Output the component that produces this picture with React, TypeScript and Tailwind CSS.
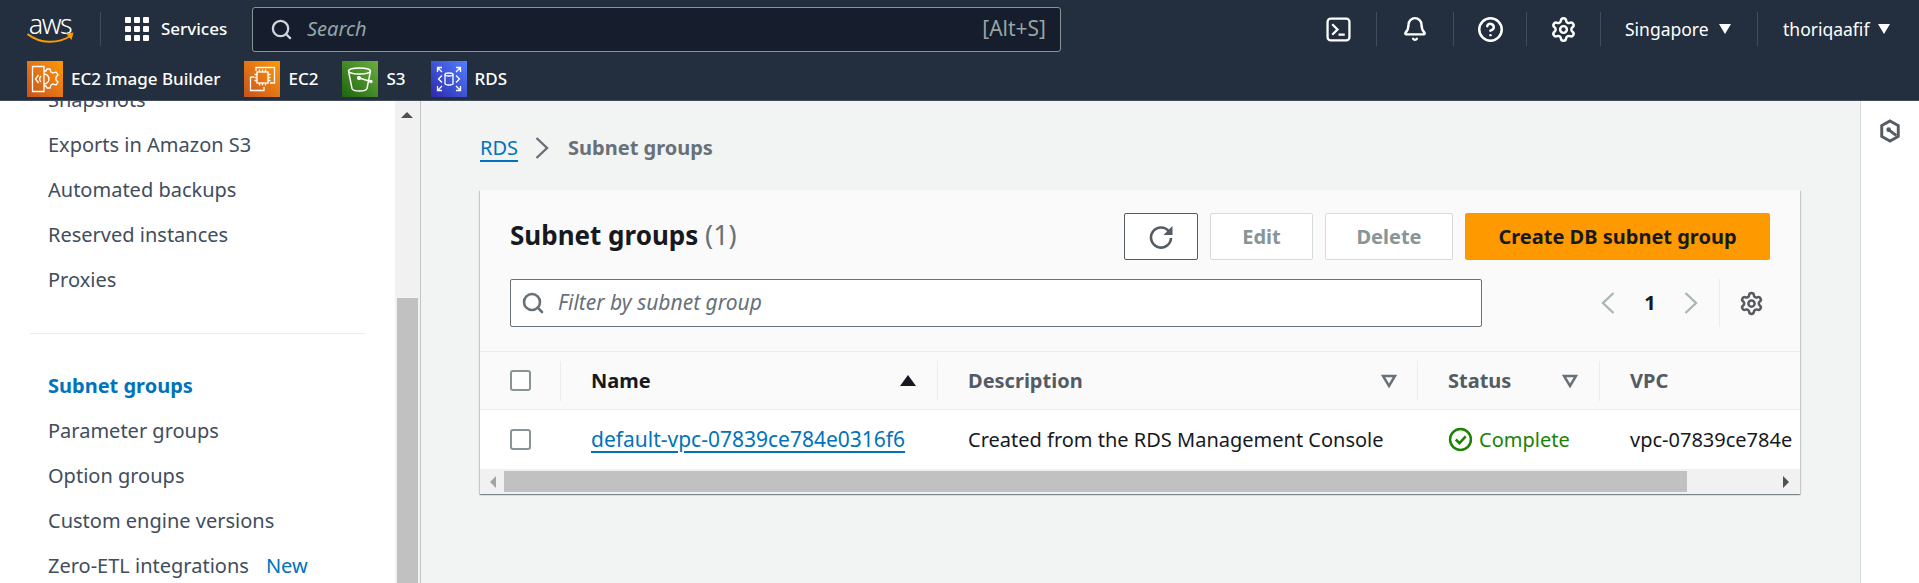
import { Search, Settings, Bell, CircleHelp } from 'lucide-react';

const font = "font-['Noto_Sans','Open_Sans',sans-serif]";

function Ec2ImageBuilderIcon() {
  return (
    <svg viewBox="0 0 36 36" className="w-9 h-9 bg-linear-to-tr from-[#c8511b] to-[#ff9900]" fill="none" stroke="white" strokeWidth="1.300">
      <path d="M5.500 5.500h11.500v25H5.500z" />
      <path d="M11.500 14l-3 4 3 4M14 15a4 4 0 0 0 0 6" />
      <path d="M17 10h2l1-2h3l1 3 2 1 3-1 2 3-2 2v3l2 2-2 3-3-1-2 1-1 3h-3l-1-2h-2M17 13a5 5 0 0 1 0 10" />
    </svg>
  );
}

function Ec2Icon() {
  return (
    <svg viewBox="0 0 36 36" className="w-9 h-9 bg-linear-to-tr from-[#c8511b] to-[#ff9900]" fill="none" stroke="white" strokeWidth="1.300">
      <path d="M12 10V6.500h18.500V22H26M6.500 16v13.500H20V26M6.500 16H10" />
      <rect x="13" y="11" width="11" height="11" />
      <path d="M15.500 11V8.500M18.500 11V8.500M21.500 11V8.500M15.500 24.500V22M18.500 24.500V22M21.500 24.500V22M10.500 13.500H13M10.500 16.500H13M10.500 19.500H13M24 13.500h2.500M24 16.500h2.500M24 19.500h2.500" />
    </svg>
  );
}

function S3Icon() {
  return (
    <svg viewBox="0 0 36 36" className="w-9 h-9 bg-linear-to-tr from-[#1b660f] to-[#6cae3e]" fill="none" stroke="white" strokeWidth="1.400">
      <ellipse cx="17.500" cy="10" rx="11" ry="3" />
      <path d="M6.500 10l3.500 17.500c.5 1.500 3.500 2.500 7.500 2.500s7-1 7.500-2.500l3.500-17.500" />
      <path d="M17 17l12 3.500" />
      <circle cx="17" cy="17" r="1.400" fill="white" />
      <circle cx="29" cy="20.500" r="1" fill="white" />
    </svg>
  );
}

function RdsIcon() {
  return (
    <svg viewBox="0 0 36 36" className="w-9 h-9 bg-linear-to-tr from-[#2e27ad] to-[#527fff]" fill="none" stroke="white" strokeWidth="1.300">
      <path d="M6.500 11V6.500H11M6.500 6.500l4.500 4.500M29.500 11V6.500H25M29.500 6.500L25 11M6.500 25v4.500H11M6.500 29.500l4.500-4.500M29.500 25v4.500H25M29.500 29.500L25 25" />
      <ellipse cx="18" cy="13.500" rx="4" ry="1.500" />
      <path d="M14 13.500v9c0 1 1.800 1.500 4 1.500s4-.5 4-1.500v-9" />
      <path d="M11 14.500l-3.500 3.500 3.500 3.500M25 14.500l3.500 3.500-3.500 3.500" />
    </svg>
  );
}

function ServiceLink({ icon, label, gap }: { icon: React.ReactNode; label: string; gap: string }) {
  return (
    <div className={`flex items-center gap-2 ${gap}`}>
      {icon}
      <span className="text-[17px] font-medium text-white">{label}</span>
    </div>
  );
}

function Sep({ className = '' }: { className?: string }) {
  return <div className={`w-px h-[34px] bg-[#414d5c] ${className}`} />;
}

function NavIconCell({ children, width }: { children: React.ReactNode; width: string }) {
  return (
    <div className={`${width} h-[34px] flex items-center justify-center border-r border-[#414d5c]`}>
      {children}
    </div>
  );
}

function Caret() {
  return <span className="w-0 h-0 border-x-[6px] border-x-transparent border-t-[10px] border-t-white" />;
}

function TopNav() {
  return (
    <header className="h-[101px] shrink-0 bg-[#232f3e] border-b border-[#414d5c] flex flex-col">
      <div className="h-[58px] flex items-center pl-[27px]">
        <div className="w-[46px] h-[30px] flex flex-col items-center">
          <span className="text-[27px] leading-[19px] font-light text-white tracking-[-1.500px]">aws</span>
          <svg viewBox="0 0 47 12" className="w-[47px] h-[12px] shrink-0 -mt-[1px]" fill="none">
            <path d="M0.500 2c13 10 30 10 43 2" stroke="#ff9900" strokeWidth="2" />
            <path d="M39 1.500l7.500-1-2 7.500z" fill="#ff9900" />
          </svg>
        </div>
        <Sep className="ml-[27px]" />
        <div className="ml-[24px] w-6 h-6 grid grid-cols-3 gap-[3px]">
          {Array.from({ length: 9 }).map((_, i) => (
            <span key={i} className="bg-white rounded-[1px]" />
          ))}
        </div>
        <span className="ml-[12px] w-[66px] whitespace-nowrap text-[17px] font-medium text-white">Services</span>
        <div className="ml-[25px] w-[809px] h-[45px] rounded-[3px] border border-[#879596] bg-[#161e2d] flex items-center pl-[17px] pr-[14px]">
          <Search className="w-[23px] h-[23px] text-[#d1d5db]" strokeWidth={2.400} />
          <span className="ml-[14px] text-[20px] italic text-[#95a5a6]">Search</span>
          <span className="ml-auto text-[21px] text-[#95a5a6]">[Alt+S]</span>
        </div>
        <div className="ml-auto flex items-center">
          <NavIconCell width="w-[76px]">
            <svg viewBox="0 0 24 24" className="w-[25px] h-[25px]" fill="none" stroke="white" strokeWidth="2.200">
              <rect x="1.500" y="1.500" width="21" height="21" rx="3" />
              <path d="M6 7l5 5-5 5M12 17h6" />
            </svg>
          </NavIconCell>
          <NavIconCell width="w-[77px]">
            <Bell className="w-[26px] h-[26px] text-white" strokeWidth={2.200} />
          </NavIconCell>
          <NavIconCell width="w-[73px]">
            <CircleHelp className="w-[27px] h-[27px] text-white" strokeWidth={2.200} />
          </NavIconCell>
          <NavIconCell width="w-[74px]">
            <Settings className="w-[27px] h-[27px] text-white" strokeWidth={2.200} />
          </NavIconCell>
          <div className="w-[157px] h-[34px] pl-[24px] flex items-center gap-[10px] border-r border-[#414d5c] text-[17.500px] text-white">
            Singapore
            <Caret />
          </div>
          <div className="w-[161px] h-[34px] pl-[25px] flex items-center gap-[9px] text-[17.500px] text-white">
            thoriqaafif
            <Caret />
          </div>
        </div>
      </div>
      <div className="flex items-center pl-[27px] h-[36px] mt-[3px]">
        <ServiceLink icon={<Ec2ImageBuilderIcon />} label="EC2 Image Builder" gap="mr-[24px]" />
        <ServiceLink icon={<Ec2Icon />} label="EC2" gap="mr-[24px]" />
        <ServiceLink icon={<S3Icon />} label="S3" gap="mr-[25px]" />
        <ServiceLink icon={<RdsIcon />} label="RDS" gap="" />
      </div>
    </header>
  );
}

const links = ['Snapshots', 'Exports in Amazon S3', 'Automated backups', 'Reserved instances', 'Proxies'];
const links2 = ['Parameter groups', 'Option groups', 'Custom engine versions'];

function Sidebar() {
  return (
    <aside className="w-[395px] shrink-0 bg-white overflow-hidden text-[20px] text-[#414d5c]">
      <div className="-mt-[24px] pl-[48px]">
        {links.map((l) => (
          <div key={l} className="h-[45px] flex items-center">{l}</div>
        ))}
      </div>
      <div className="ml-[30px] w-[335px] h-px bg-[#eaeded] mt-[31px] mb-[29px]" />
      <div className="pl-[48px]">
        <div className="h-[45px] flex items-center font-bold text-[#0073bb]">Subnet groups</div>
        {links2.map((l) => (
          <div key={l} className="h-[45px] flex items-center">{l}</div>
        ))}
        <div className="h-[45px] flex items-center">
          Zero-ETL integrations
          <span className="ml-[17px] text-[#0073bb]">New</span>
        </div>
      </div>
    </aside>
  );
}

function SidebarScrollbar() {
  return (
    <div className="w-[26px] shrink-0 bg-[#f1f1f1] border-r border-[#c4c6c6] flex flex-col items-center pr-px">
      <div className="mt-[11px] w-0 h-0 border-x-[6px] border-x-transparent border-b-[6px] border-b-[#505050]" />
      <div className="mt-[180px] w-[21px] flex-1 bg-[#c1c1c1]" />
    </div>
  );
}

function Chevron({ flip = false, className = '' }: { flip?: boolean; className?: string }) {
  return (
    <svg viewBox="0 0 14 24" className={`w-[14px] h-[24px] ${className}`} fill="none" stroke="currentColor" strokeWidth="2.400">
      <path d={flip ? 'M12.500 2L2 12l10.500 10' : 'M1.500 2L12 12 1.500 22'} />
    </svg>
  );
}

function RefreshIcon() {
  return (
    <svg viewBox="0 0 26 26" className="w-[26px] h-[26px]" fill="none">
      <path d="M21 7.500A10 10 0 1 0 23 14" stroke="#545b64" strokeWidth="2.600" />
      <path d="M24.500 2v9h-9z" fill="#545b64" />
    </svg>
  );
}

function Card() {
  return (
    <section className="w-[1320px] h-[304px] bg-white shadow-[0_1px_1px_0_rgba(0,28,36,0.3),1px_1px_1px_0_rgba(0,28,36,0.15),-1px_1px_1px_0_rgba(0,28,36,0.15)] flex flex-col">
      <div className="h-[162px] shrink-0 bg-[#fafafa] border-b border-[#eaeded] pl-[30px] pr-[30px]">
        <div className="pt-[23px] flex items-center">
          <h1 className="text-[26px] font-bold text-[#16191f] -mt-[2px]">
            Subnet groups <span className="text-[27px] font-normal text-[#687078]">(1)</span>
          </h1>
          <button className="ml-auto w-[74px] h-[47px] flex items-center justify-center bg-white border border-[#545b64] rounded-[2px]">
            <RefreshIcon />
          </button>
          <button className="ml-3 w-[103px] h-[47px] bg-white border border-[#d5dbdb] rounded-[2px] text-[20px] font-bold text-[#879596]">Edit</button>
          <button className="ml-3 w-[128px] h-[47px] bg-white border border-[#d5dbdb] rounded-[2px] text-[20px] font-bold text-[#879596]">Delete</button>
          <button className="ml-3 w-[305px] h-[47px] bg-[#ff9900] rounded-[2px] text-[20px] font-bold text-[#16191f]">Create DB subnet group</button>
        </div>
        <div className="mt-[19px] flex items-center">
          <div className="w-[972px] h-[48px] bg-white border border-[#687078] rounded-[2px] flex items-center pl-[10px]">
            <Search className="w-[24px] h-[24px] text-[#687078]" strokeWidth={2.600} />
            <span className="ml-[13px] text-[21px] italic text-[#687078]">Filter by subnet group</span>
          </div>
          <Chevron flip className="ml-[119px] text-[#aab7b8]" />
          <span className="ml-[29px] w-[12px] text-center text-[20px] font-bold text-[#16191f]">1</span>
          <Chevron className="ml-[28px] text-[#aab7b8]" />
          <div className="ml-[21px] w-px h-[48px] bg-[#eaeded]" />
          <Settings className="ml-[19px] w-[25px] h-[25px] text-[#545b64]" strokeWidth={2.400} />
        </div>
      </div>
      <div className="h-[58px] shrink-0 bg-[#fafafa] border-b border-[#eaeded] flex items-center text-[20px] font-bold text-[#545b64]">
        <div className="w-[81px] pl-[30px] h-[40px] flex items-center border-r border-[#eaeded]">
          <span className="w-[21px] h-[21px] bg-white border-2 border-[#879596] rounded-[3px]" />
        </div>
        <div className="w-[377px] pl-[30px] pr-[21px] h-[40px] flex items-center justify-between border-r border-[#eaeded] text-[#16191f]">
          Name
          <span className="w-0 h-0 border-x-[8px] border-x-transparent border-b-[11px] border-b-[#16191f]" />
        </div>
        <div className="w-[480px] pl-[30px] pr-[20px] h-[40px] flex items-center justify-between border-r border-[#eaeded]">
          Description
          <FilterCaret />
        </div>
        <div className="w-[182px] pl-[30px] pr-[21px] h-[40px] flex items-center justify-between border-r border-[#eaeded]">
          Status
          <FilterCaret />
        </div>
        <div className="pl-[30px]">VPC</div>
      </div>
      <div className="h-[59px] shrink-0 bg-white flex items-center text-[20px] text-[#16191f] overflow-hidden whitespace-nowrap">
        <div className="w-[81px] shrink-0 pl-[30px] flex items-center">
          <span className="w-[21px] h-[21px] bg-white border-2 border-[#879596] rounded-[3px]" />
        </div>
        <div className="w-[377px] shrink-0 pl-[30px]">
          <a className="text-[21px] text-[#0073bb] underline decoration-2 underline-offset-[4px]">default-vpc-07839ce784e0316f6</a>
        </div>
        <div className="w-[480px] shrink-0 pl-[30px]">Created from the RDS Management Console</div>
        <div className="w-[182px] shrink-0 pl-[30px] flex items-center gap-[6px] text-[#1d8102]">
          <svg viewBox="0 0 24 24" className="w-[25px] h-[25px]" fill="none" stroke="#1d8102" strokeWidth="2.400">
            <circle cx="12" cy="12" r="10" />
            <path d="M7.500 12l3.500 3.500 6-6.500" />
          </svg>
          Complete
        </div>
        <div className="pl-[30px]">vpc-07839ce784e</div>
      </div>
      <div className="flex-1 bg-[#f1f1f1] flex items-center">
        <span className="ml-[10px] w-0 h-0 border-y-[6px] border-y-transparent border-r-[6px] border-r-[#a3a3a3]" />
        <div className="ml-[8px] w-[1183px] h-[21px] bg-[#c1c1c1]" />
        <span className="ml-auto mr-[11px] w-0 h-0 border-y-[6px] border-y-transparent border-l-[6px] border-l-[#505050]" />
      </div>
    </section>
  );
}

function FilterCaret() {
  return (
    <svg viewBox="0 0 16 14" className="w-4 h-[14px]" fill="none" stroke="#687078" strokeWidth="2.500">
      <path d="M2 2h12l-6 10z" />
    </svg>
  );
}

function RightRail() {
  return (
    <div className="flex-1 bg-white border-l border-[#d5dbdb] flex justify-center pt-[18px]">
      <svg viewBox="0 0 24 26" className="w-[22px] h-[24px]" fill="none" stroke="#545b64" strokeWidth="3.200">
        <path d="M12 2l9 5v12l-9 5-9-5V7z" />
        <circle cx="10.500" cy="11.500" r="2.500" fill="#545b64" stroke="none" />
        <path d="M11 12l8 6" />
      </svg>
    </div>
  );
}

export default function App() {
  return (
    <div className={`w-[1919px] h-[583px] overflow-hidden flex flex-col bg-[#f2f3f3] ${font}`}>
      <TopNav />
      <div className="flex-1 flex min-h-0">
        <Sidebar />
        <SidebarScrollbar />
        <main className="w-[1439px] shrink-0 pl-[59px]">
          <nav className="h-[89px] flex items-center text-[20px] pt-[5px]">
            <a className="text-[#0073bb] underline decoration-2 underline-offset-[5px]">RDS</a>
            <Chevron className="ml-[17px] mr-[19px] text-[#687078]" />
            <span className="font-bold text-[#687078]">Subnet groups</span>
          </nav>
          <Card />
        </main>
        <RightRail />
      </div>
    </div>
  );
}
